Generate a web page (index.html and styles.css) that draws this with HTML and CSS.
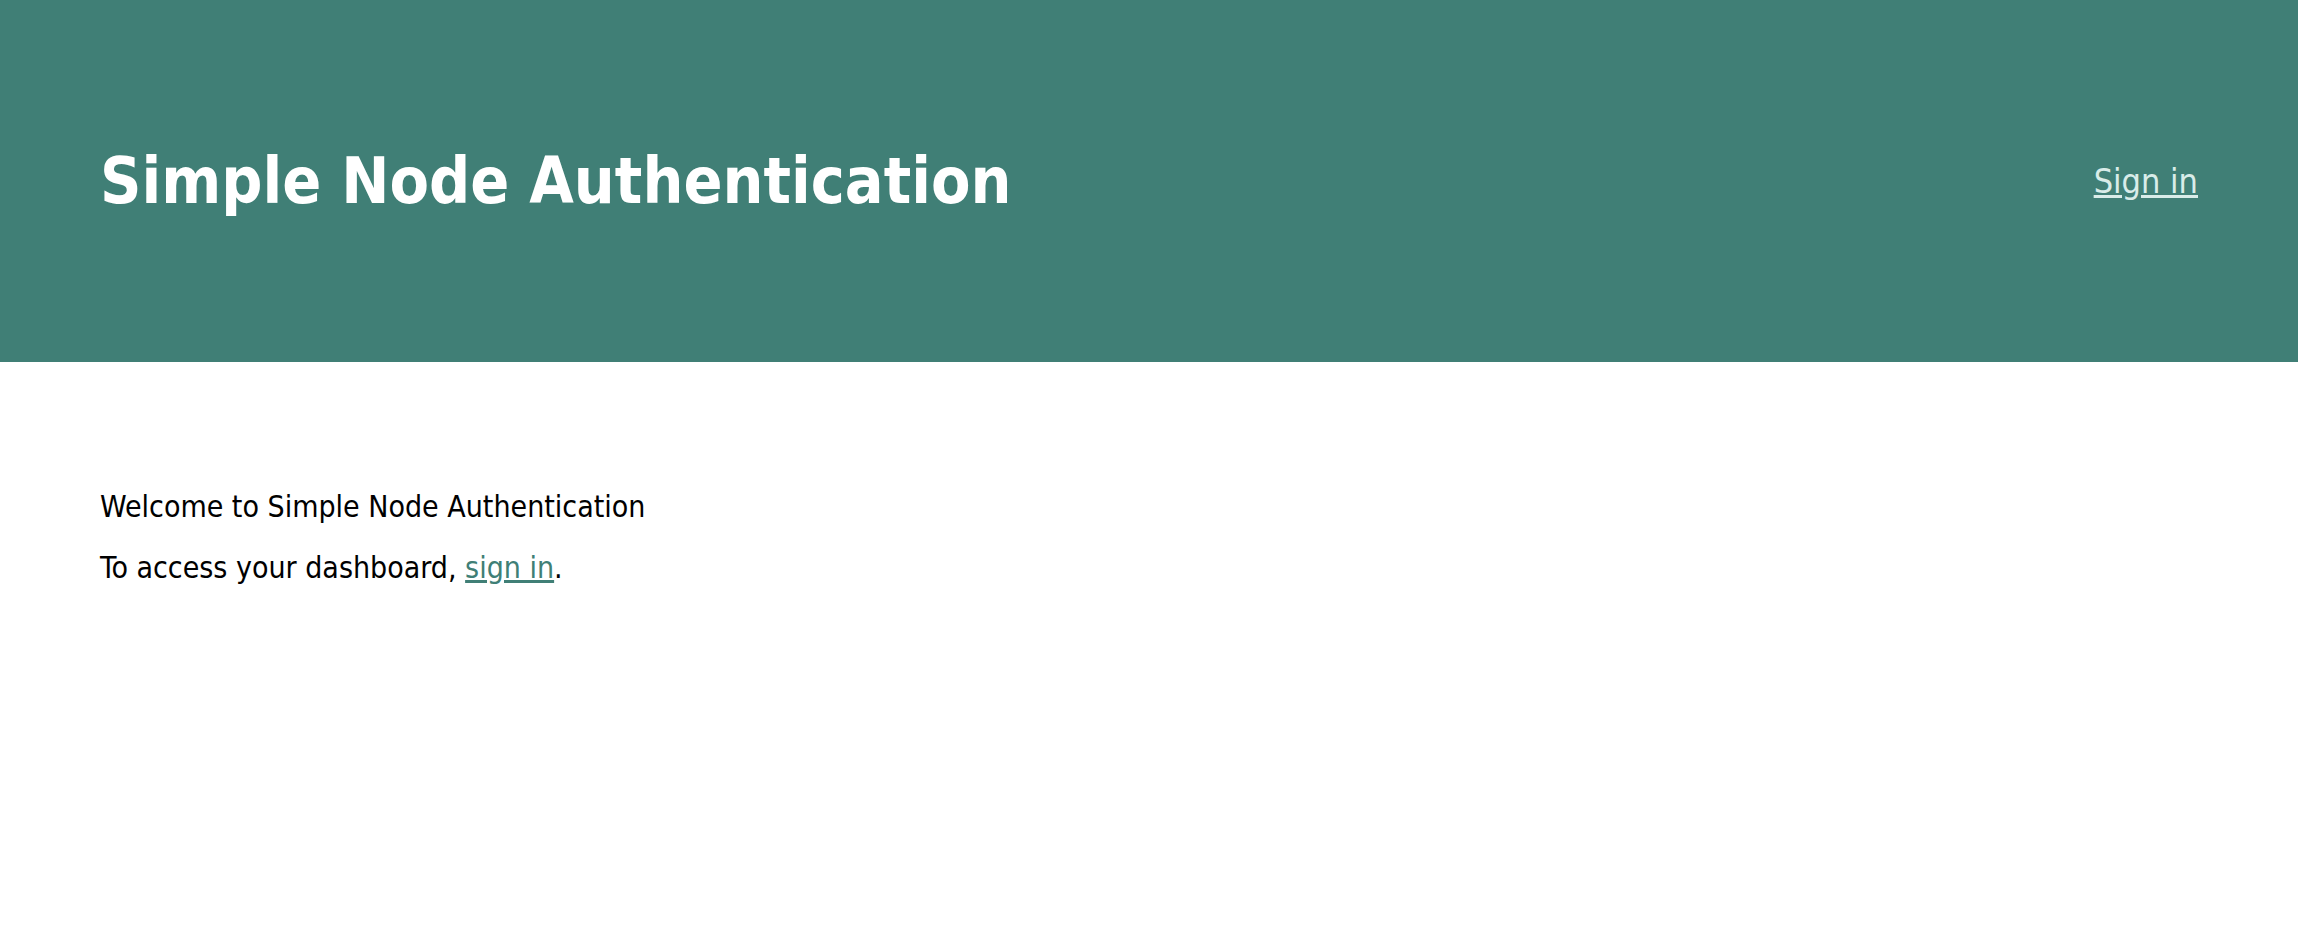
FILE: index.html
```html
<!DOCTYPE html>
<html>
<head>
<meta charset="utf-8">
<title>Simple Node Authentication</title>
<link rel="stylesheet" href="styles.css">
</head>
<body>
<header class="site-header">
  <h1 class="site-title">Simple Node Authentication</h1>
  <nav class="site-nav"><a class="nav-link" href="#">Sign in</a></nav>
</header>
<main class="content">
  <p class="text">Welcome to Simple Node Authentication</p>
  <p class="text">To access your dashboard, <a class="inline-link" href="#">sign in</a>.</p>
</main>
</body>
</html>
```
FILE: styles.css
```css
html, body {
  margin: 0;
  padding: 0;
  background: #ffffff;
  font-family: "DejaVu Sans Condensed", "DejaVu Sans", "Liberation Sans", sans-serif;
}
.site-header {
  background: #407f76;
  height: 362px;
  box-sizing: border-box;
  padding: 0 100px;
  display: flex;
  align-items: center;
  justify-content: space-between;
}
.site-title {
  margin: 0;
  color: #ffffff;
  font-size: 64px;
  font-weight: bold;
}
.nav-link {
  color: #d9ece9;
  font-size: 34px;
}
.content {
  padding: 128px 100px;
}
.text {
  margin: 0 0 27px;
  font-size: 30px;
  color: #000;
  line-height: 34px;
}
.inline-link {
  color: #407f76;
}
```
